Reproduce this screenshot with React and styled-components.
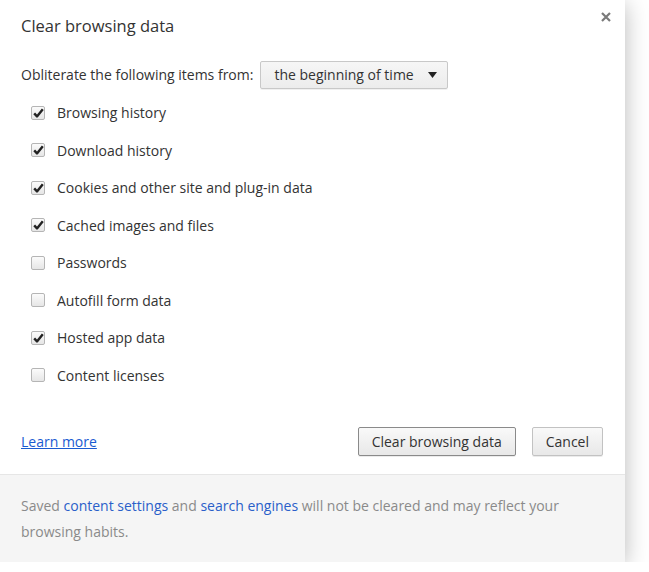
import styled, { createGlobalStyle } from 'styled-components';

const Global = createGlobalStyle`
  body {
    margin: 0;
    background: #fff;
    font-family: "Open Sans", "Noto Sans", sans-serif;
    color: #333;
  }
`;

const Dialog = styled.div`
  width: 625px;
  height: 562px;
  background: #fff;
  box-shadow: 0 4px 22px rgba(0, 0, 0, 0.28);
  display: flex;
  flex-direction: column;
  font-size: 14px;
`;

const Header = styled.div`
  height: 50px;
  display: flex;
  justify-content: space-between;
  padding: 0 11px 0 21px;
`;

const Title = styled.h1`
  margin: 0;
  align-self: center;
  font-size: 16.5px;
  font-weight: 400;
  color: #333;
`;

const Close = styled.button`
  margin-top: 9px;
  align-self: flex-start;
  background: none;
  border: 0;
  padding: 2px;
  width: 16px;
  height: 16px;
  display: flex;
  cursor: pointer;
`;

const Body = styled.div`
  padding: 10px 22px 0 21px;
  flex: 1;
  display: flex;
  flex-direction: column;
`;

const SelectRow = styled.div`
  display: flex;
  align-items: center;
  gap: 7px;
  height: 29px;
`;

const Select = styled.div`
  height: 28px;
  width: 188px;
  box-sizing: border-box;
  border: 1px solid #c8c8c8;
  border-radius: 2px;
  background: linear-gradient(#f6f6f6, #ececec);
  box-shadow: 0 1px 0 rgba(0, 0, 0, 0.06);
  display: flex;
  align-items: center;
  justify-content: space-between;
  padding: 0 10px 0 13px;
  color: #333;
`;

const List = styled.div`
  margin-top: 5px;
  padding-left: 10px;
  display: flex;
  flex-direction: column;
`;

const Row = styled.label`
  height: 37.5px;
  display: flex;
  align-items: center;
  gap: 12px;
`;

const Box = styled.span`
  width: 14px;
  height: 14px;
  box-sizing: border-box;
  border: 1px solid #b5b5b5;
  border-radius: 2px;
  background: linear-gradient(#fbfbfb, #e6e6e6);
  display: flex;
  align-items: center;
  justify-content: center;
`;

const Actions = styled.div`
  margin-top: 33px;
  display: flex;
  align-items: center;
  gap: 16px;
`;

const Link = styled.a`
  color: #1a5bd1;
  text-decoration: underline;
  margin-right: auto;
  cursor: pointer;
`;

const Button = styled.button`
  height: 29px;
  padding: 0 13px;
  font: inherit;
  font-size: 14px;
  color: #333;
  border: 1px solid ${p => (p.$primary ? '#8a8a8a' : '#c2c2c2')};
  border-radius: 2px;
  background: linear-gradient(#f9f9f9, #e8e8e8);
  box-shadow: 0 1px 0 rgba(0, 0, 0, 0.08);
  cursor: pointer;
`;

const Footer = styled.div`
  background: #f5f5f5;
  border-top: 1px solid #e6e6e6;
  padding: 18px 56px 17px 21px;
  line-height: 26px;
  color: #8a8a8a;
`;

const FootLink = styled.span`
  color: #2a5fc9;
`;

const ITEMS = [
  { label: 'Browsing history', on: true },
  { label: 'Download history', on: true },
  { label: 'Cookies and other site and plug-in data', on: true },
  { label: 'Cached images and files', on: true },
  { label: 'Passwords', on: false },
  { label: 'Autofill form data', on: false },
  { label: 'Hosted app data', on: true },
  { label: 'Content licenses', on: false },
];

const Check = () => (
  <svg width="11" height="10" viewBox="0 0 11 10">
    <path d="M1.2 5.4 L4 8.4 L9.8 1.2" fill="none" stroke="#222" strokeWidth="2.4" strokeLinejoin="round" />
  </svg>
);

const App = () => (
  <>
    <Global />
    <Dialog>
      <Header>
        <Title>Clear browsing data</Title>
        <Close aria-label="Close">
          <svg width="12" height="12" viewBox="0 0 12 12">
            <path d="M2 2 L10 10 M10 2 L2 10" stroke="#7a7a7a" strokeWidth="2.2" />
          </svg>
        </Close>
      </Header>
      <Body>
        <SelectRow>
          <span>Obliterate the following items from:</span>
          <Select>
            <span>the beginning of time</span>
            <svg width="9" height="6" viewBox="0 0 9 6">
              <path d="M0 0 H9 L4.5 6 Z" fill="#222" />
            </svg>
          </Select>
        </SelectRow>
        <List>
          {ITEMS.map(it => (
            <Row key={it.label}>
              <Box>{it.on && <Check />}</Box>
              <span>{it.label}</span>
            </Row>
          ))}
        </List>
        <Actions>
          <Link>Learn more</Link>
          <Button $primary>Clear browsing data</Button>
          <Button>Cancel</Button>
        </Actions>
      </Body>
      <Footer>
        Saved <FootLink>content settings</FootLink> and <FootLink>search engines</FootLink> will
        not be cleared and may reflect your browsing habits.
      </Footer>
    </Dialog>
  </>
);

export default App;
